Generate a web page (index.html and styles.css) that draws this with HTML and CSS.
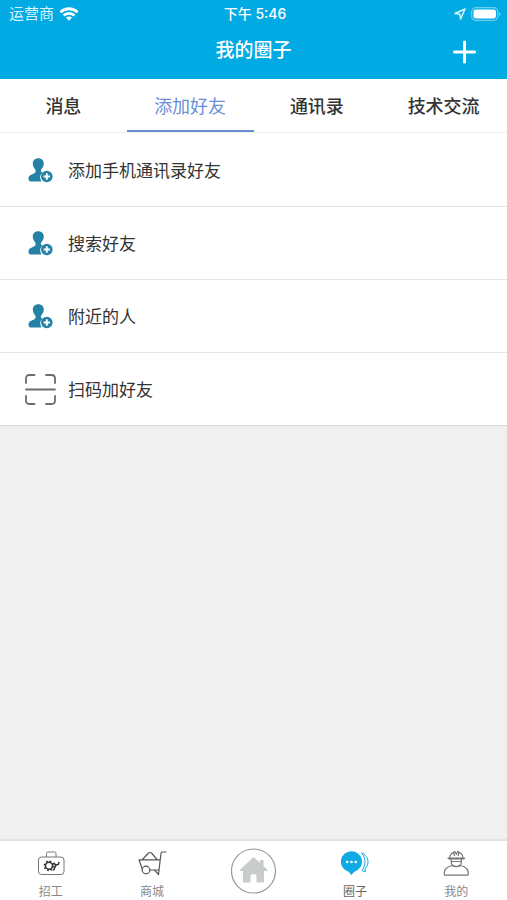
FILE: index.html
```
<!DOCTYPE html>
<html lang="zh-CN">
<head>
    <meta charset="UTF-8">
    <meta name="viewport" content="width=device-width, initial-scale=1.0">
    <title>我的圈子</title>
    <link rel="stylesheet" href="styles.css">
</head>
<body>

<header class="header">
    <div class="status">
        <div class="carrier">
            <span>运营商</span>
            <svg width="20" height="14" viewBox="0 0 20 14" fill="none" stroke="#fff" stroke-width="2.8">
                <path d="M1.4 5.2a12.4 12.4 0 0 1 17.2 0M4.6 8.5a7.8 7.8 0 0 1 10.8 0"/>
                <path d="M10 13.8L7 10.8a4.2 4.2 0 0 1 6 0z" fill="#fff" stroke="none"/>
            </svg>
        </div>
        <div class="time">下午 5:46</div>
        <div class="battery">
            <svg width="12" height="12" viewBox="0 0 12 12" fill="none" stroke="#d9f4fd" stroke-width="1.5" stroke-linejoin="round">
                <path d="M11 1L1 5.5l4.8.8L6.6 11z"/>
            </svg>
            <svg width="30" height="14" viewBox="0 0 30 14">
                <rect x=".7" y=".7" width="26" height="12.6" rx="4" fill="none" stroke="#6fcdf0" stroke-width="1.2"/>
                <rect x="2.5" y="2.5" width="22.5" height="9" rx="2.4" fill="#fff"/>
                <path d="M28 5v4q1.6-.6 1.6-2T28 5z" fill="#6fcdf0"/>
            </svg>
        </div>
    </div>
    <div class="title-bar">
        <h1>我的圈子</h1>
        <button class="add" type="button" aria-label="添加">
            <svg width="24" height="24" viewBox="0 0 24 24" stroke="#fff" stroke-width="3" stroke-linecap="round">
                <path d="M12.500 2v20M2.500 12h20"/>
            </svg>
        </button>
    </div>
</header>

<nav class="tabs">
    <a href="#">消息</a>
    <a href="#" class="active">添加好友</a>
    <a href="#">通讯录</a>
    <a href="#">技术交流</a>
</nav>

<!-- shared icon for the friend rows -->
<svg class="defs" aria-hidden="true">
    <symbol id="friend" viewBox="0 0 32 32">
        <path d="M14.300 4.200c-3.300 0-5.500 2.200-5.500 5.400 0 2.500 1.200 4.500 2.500 6.200.8 1.500.3 2.800-1.300 3.600-2 1-5.500 1.600-5.500 5 0 2.200 1.200 3.100 3.500 3.100h9.500a7.300 7.300 0 0 1 1-9c-1.500-.5-2.200-1.500-1.300-3 1.500-1.700 2.600-3.500 2.600-5.900 0-3.200-2.200-5.400-5.500-5.400z" fill="#2581a6"/>
        <circle cx="22.800" cy="22.500" r="5.800" fill="#2581a6"/>
        <path d="M22.800 19.300v6.400M19.600 22.500H26" stroke="#fff" stroke-width="1.900"/>
    </symbol>
</svg>

<main class="list">
    <a href="#" class="row">
        <svg width="32" height="32"><use href="#friend"/></svg>
        <span>添加手机通讯录好友</span>
    </a>
    <a href="#" class="row">
        <svg width="32" height="32"><use href="#friend"/></svg>
        <span>搜索好友</span>
    </a>
    <a href="#" class="row">
        <svg width="32" height="32"><use href="#friend"/></svg>
        <span>附近的人</span>
    </a>
    <a href="#" class="row">
        <svg width="32" height="32" viewBox="0 0 32 32" fill="none" stroke="#6c6c6c" stroke-width="1.800" stroke-linecap="round">
            <path d="M2 10V5.500Q2 2 5.500 2h5M22 2h5.500Q31 2 31 5.500V10M31 23v4.500q0 3.500-3.500 3.500H22M10.500 31h-5Q2 31 2 27.500V23M2 16.500h29"/>
        </svg>
        <span>扫码加好友</span>
    </a>
</main>

<nav class="bottom-nav">
    <a href="#">
        <svg width="30" height="28" viewBox="0 0 30 28" fill="none" stroke="#777">
            <rect x="2.500" y="7" width="25.500" height="17.500" rx="3"/>
            <path d="M10.500 7V3.500q0-1.500 1.500-1.500h6.500q1.500 0 1.500 1.500V7"/>
            <circle cx="13" cy="15.800" r="3.500" stroke="#333" stroke-width="1.500"/>
            <circle cx="13" cy="15.800" r="4.700" stroke="#333" stroke-width="1.400" stroke-dasharray="1.800 1.890"/>
            <path d="M17.500 20.500l3-6.500M18 12.800l1.500 2.400 2.800-.7.700-2.500" stroke="#333" stroke-width="1.500"/>
        </svg>
        <span>招工</span>
    </a>
    <a href="#">
        <svg width="30" height="28" viewBox="0 0 30 28" fill="none" stroke="#555" stroke-width="1.200" stroke-linejoin="round">
            <path d="M29.500 2h-4.300q-1 0-1.200 1.500L22 20h-9.500M5.200 19L2 9.800h21M5.500 9.500l6-6.500q1.500-1 3 0l5.500 6.500"/>
            <circle cx="9" cy="20" r="3.800" fill="#fff"/>
            <path d="M17.500 20l4 4.500L22 20"/>
        </svg>
        <span>商城</span>
    </a>
    <a href="#" class="home" aria-label="首页">
        <svg width="46" height="46" viewBox="0 0 46 46">
            <circle cx="22.500" cy="23" r="22" fill="#fff" stroke="#999" stroke-width="1.200"/>
            <path d="M22.500 9L9 21.800q-.5 1.200 1 1.200h2v11.500h7.500V28q0-2 3-2t3 2v6.500H33V23h2.500q1.500 0 1-1.200l-4-3.700V12H29v2.800z" fill="#c8cccb"/>
        </svg>
    </a>
    <a href="#" class="active">
        <svg width="30" height="28" viewBox="0 0 30 28">
            <path d="M11.400 1.300a10.400 10.400 0 0 1 3 20.400L11.200 25l-2.400-3.200A10.400 10.400 0 0 1 11.400 1.300z" fill="#0eaae6"/>
            <g fill="#fff"><circle cx="7.200" cy="12" r="1.300"/><circle cx="11.500" cy="12" r="1.300"/><circle cx="15.800" cy="12" r="1.300"/></g>
            <path d="M21.500 2.800c4 1.600 6.500 5 6.500 9 0 3-1.300 5.300-3 7l.4 3.200-3.400-1.500C26 16 26 8 21.500 2.800z" fill="#fff" stroke="#0eaae6" stroke-linejoin="round"/>
        </svg>
        <span>圈子</span>
    </a>
    <a href="#">
        <svg width="30" height="28" viewBox="0 0 30 28" fill="none" stroke="#777" stroke-width="1.200" stroke-linecap="round" stroke-linejoin="round">
            <path d="M8 8.800q-1 0-1-.8h16.600q0 .8-1 .8zM8.800 8q0-4.500 3.700-5.500l1 3M21.800 8q0-4.500-3.700-5.500l-1 3M12.500 2.500q.5-1 1.500-.8l1.300 2.600 1.300-2.600q1-.2 1.500.8"/>
            <path d="M10.200 9v2.500q0 5 5.100 5t5.100-5V9M11 11.500h8.600"/>
            <path d="M3.500 25.200Q2 17.500 11.200 15.500q4.100 2.200 8.200 0Q28.600 17.500 27.100 25.200z"/>
        </svg>
        <span>我的</span>
    </a>
</nav>

</body>
</html>
```
FILE: styles.css
```
body {
    display: flex;
    flex-direction: column;
    min-height: 100vh;
    margin: 0;
    background-color: #f0f0f0;
    color: #333;
    font-family: 'Liberation Sans', 'Noto Sans CJK SC', sans-serif;
}

a {
    color: inherit;
    text-decoration: none;
}

svg {
    display: block;
    flex-shrink: 0;
}

.defs {
    position: absolute;
    width: 0;
    height: 0;
}

.header {
    height: 79px;
    background-color: #02aae4;
    color: #fff;
}

.status {
    display: grid;
    grid-template-columns: 1fr auto 1fr;
    align-items: center;
    height: 27px;
    padding: 0 6px 0 9px;
    font-size: 15px;
    line-height: 27px;
}

.carrier {
    display: flex;
    align-items: center;
    gap: 5px;
    color: #d9f4fd;
}

.time {
    font-family: Inter, 'Noto Sans CJK SC', sans-serif;
    font-size: 14px;
    font-weight: 500;
}

.battery {
    display: flex;
    align-items: center;
    justify-content: flex-end;
    gap: 5px;
}

.title-bar {
    display: grid;
    grid-template-columns: 1fr auto 1fr;
    align-items: center;
    height: 50px;
    padding: 0 27px;
}

.title-bar h1 {
    grid-column: 2;
    margin: 0;
    padding-bottom: 2px;
    font-size: 19px;
    font-weight: 500;
    line-height: 28px;
}

.add {
    justify-self: end;
    padding: 4px;
    border: none;
    background: none;
    cursor: pointer;
}

.tabs {
    display: flex;
    height: 53px;
    border-bottom: 1px solid #f0f0f0;
    background-color: #fff;
}

.tabs a {
    flex: 1;
    height: 51px;
    border-bottom: 2px solid transparent;
    font-size: 18px;
    font-weight: 500;
    line-height: 56px;
    text-align: center;
}

.tabs .active {
    border-color: #6a8fd0;
    color: #6a8fd8;
    font-weight: 400;
}

.list {
    padding-top: 1px;
    background-color: #fff;
}

.row {
    display: flex;
    align-items: center;
    gap: 12px;
    height: 72px;
    padding: 0 24px;
    border-bottom: 1px solid #e4e4e4;
    font-size: 17px;
}

.row span {
    padding-bottom: 2px;
}

.row:last-child {
    border-color: #d8d8d8;
}

.bottom-nav {
    display: flex;
    height: 59px;
    margin-top: auto;
    border-top: 2px solid #e2e2e2;
    background-color: #fff;
    color: #888;
    font-size: 12px;
}

.bottom-nav a {
    flex: 1;
    display: flex;
    flex-direction: column;
    align-items: center;
    gap: 4px;
    padding-top: 9px;
    line-height: 20px;
}

.bottom-nav .home {
    padding-top: 7px;
}

.bottom-nav .active {
    color: #666;
}
```
